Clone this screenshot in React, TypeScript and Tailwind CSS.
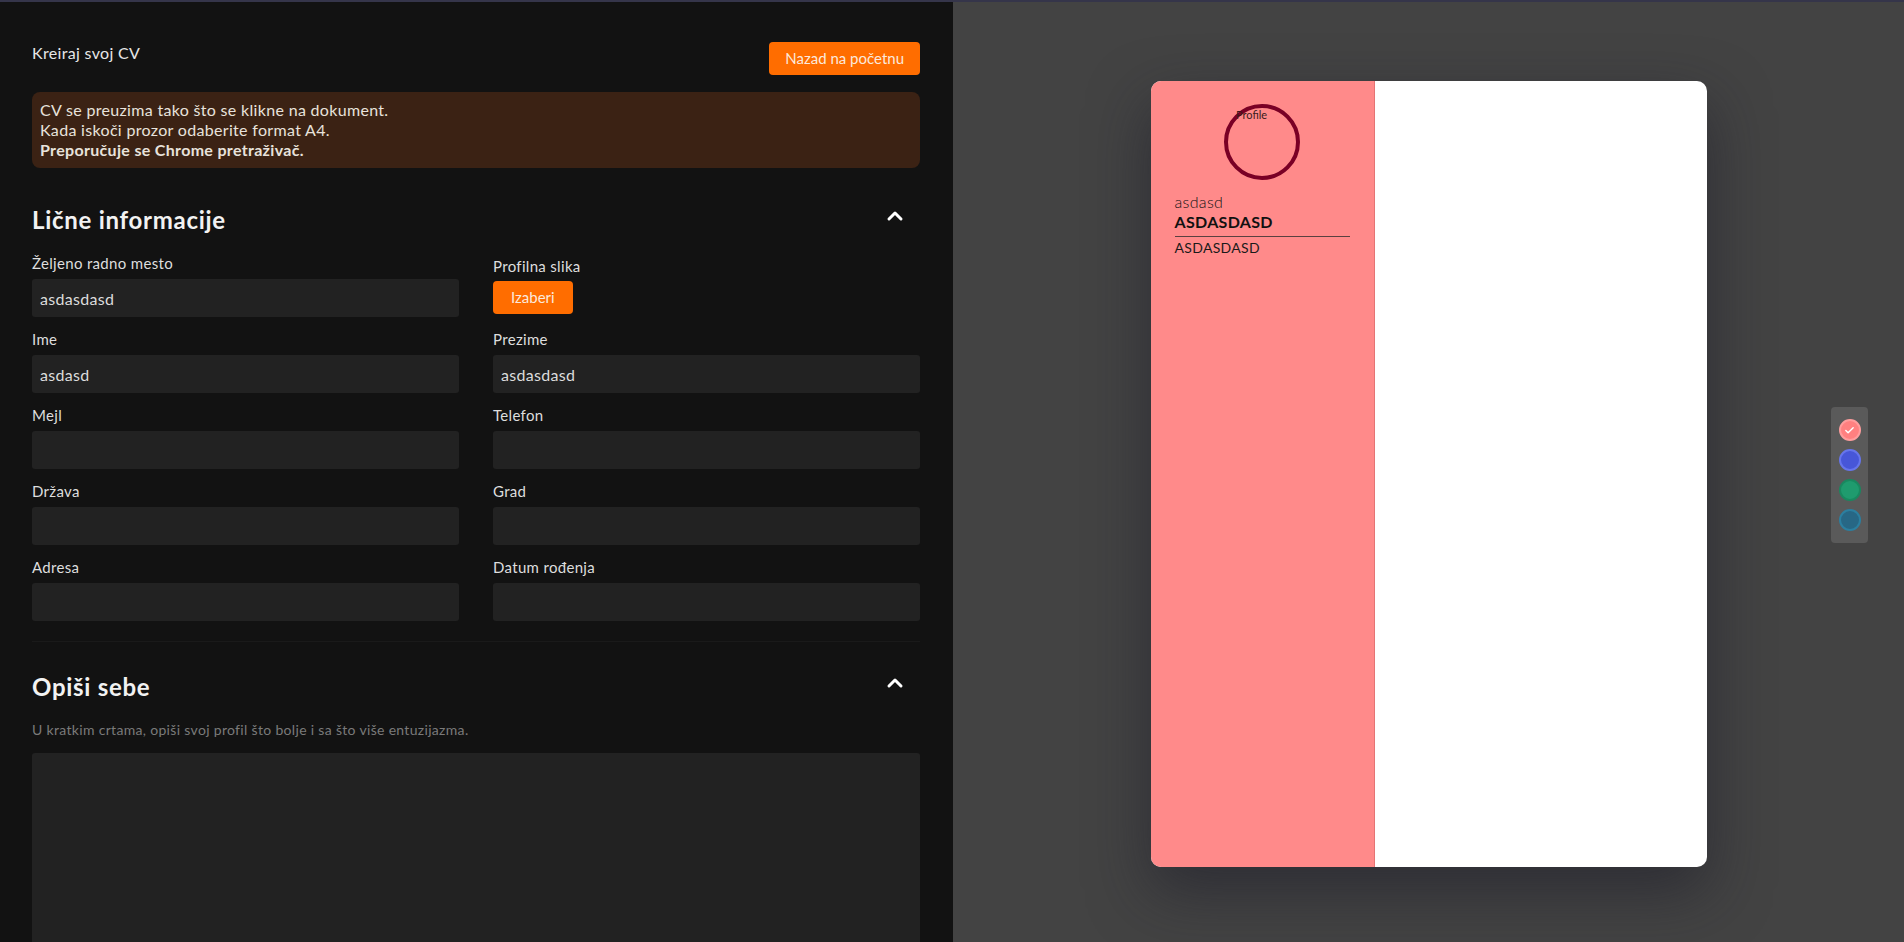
import React, { useState } from 'react';
import { ChevronUp, Check } from 'lucide-react';

const fields: [string, string][] = [
  ['Ime', 'asdasd'],
  ['Prezime', 'asdasdasd'],
  ['Mejl', ''],
  ['Telefon', ''],
  ['Država', ''],
  ['Grad', ''],
  ['Adresa', ''],
  ['Datum rođenja', ''],
];

const colors = [
  { bg: 'bg-[#ff8080]', border: 'border-[#ff9d9d]' },
  { bg: 'bg-[#4756d8]', border: 'border-[#6675ec]' },
  { bg: 'bg-[#1f9b6e]', border: 'border-[#19885f]' },
  { bg: 'bg-[#276785]', border: 'border-[#2b7fa0]' },
];

const Field = ({ label, value }: { label: string; value: string }) => (
  <div className="flex flex-col">
    <label className="text-[15px] leading-6 text-[#dedede]">{label}</label>
    <input
      readOnly
      value={value}
      className="mt-1 h-[38px] w-full rounded-[3px] bg-[#222222] px-2 text-base tracking-[0.02em] text-[#dcdcdc] outline-none"
    />
  </div>
);

const SectionHeader = ({ title }: { title: string }) => (
  <div className="flex h-8 items-center justify-between">
    <h2 className="text-2xl font-bold leading-8 tracking-[0.03em] text-[#f2f2f2]">{title}</h2>
    <button type="button" className="-mt-2 mr-[13px] text-white">
      <ChevronUp size={24} strokeWidth={3} />
    </button>
  </div>
);

export default function App() {
  const [active, setActive] = useState(0);

  return (
    <div
      className="flex h-screen w-full overflow-hidden border-t-2 border-[#35354a] tracking-[0.02em]"
      style={{ fontFamily: 'Lato, "Noto Sans", sans-serif' }}
    >
      {/* form */}
      <div className="w-[953px] shrink-0 overflow-hidden bg-[#121212] pl-8 pr-[33px] pt-[39px]">
        <div className="flex items-start justify-between">
          <span className="text-base leading-6 text-[#e6e6e6]">Kreiraj svoj CV</span>
          <button
            type="button"
            className="mt-[1px] h-[33px] rounded bg-[#ff6d00] px-4 text-[15px] tracking-normal text-[#fbe9dd]"
          >
            Nazad na početnu
          </button>
        </div>

        <div className="mt-[17px] rounded-lg bg-[#3b2214] p-2 text-base leading-5 text-[#e8e2dc]">
          <p>CV se preuzima tako što se klikne na dokument.</p>
          <p>Kada iskoči prozor odaberite format A4.</p>
          <p className="font-bold">Preporučuje se Chrome pretraživač.</p>
        </div>

        <div className="mt-9">
          <SectionHeader title="Lične informacije" />
        </div>

        <div className="mt-[15px] grid grid-cols-2 gap-x-[34px] gap-y-[10px]">
          <Field label="Željeno radno mesto" value="asdasdasd" />
          <div className="flex flex-col items-start pt-[3px]">
            <label className="text-[15px] leading-6 text-[#dedede]">Profilna slika</label>
            <button
              type="button"
              className="mt-[3px] h-[33px] rounded bg-[#ff6d00] px-[18px] text-[15px] tracking-normal text-[#fbe9dd]"
            >
              Izaberi
            </button>
          </div>
          {fields.map(([label, value]) => (
            <Field key={label} label={label} value={value} />
          ))}
        </div>

        <div className="mt-5 border-t border-[#1a1a1a]" />

        <div className="mt-[29px]">
          <SectionHeader title="Opiši sebe" />
        </div>
        <p className="mt-[17px] text-sm leading-5 text-[#7a7a7a]">
          U kratkim crtama, opiši svoj profil što bolje i sa što više entuzijazma.
        </p>
        <textarea
          readOnly
          className="mt-[13px] h-[400px] w-full resize-none rounded-[3px] bg-[#222222] outline-none"
        />
      </div>

      {/* preview */}
      <div className="relative flex flex-1 justify-center bg-[#434343]">
        <div className="mt-[79px] flex h-[786px] w-[556px] overflow-hidden rounded-[10px] bg-white shadow-[0_24px_60px_rgba(28,28,40,0.55)]">
          <div className="w-[224px] border-r border-[#e57474] bg-[#ff8a8a] px-6 pt-[23px]">
            <div className="relative mx-auto h-[76px] w-[76px] rounded-full border-4 border-[#7a0025]">
              <span className="absolute left-[8px] top-0 text-[11px] leading-[13px] tracking-normal text-[#3a1a1a]">
                Profile
              </span>
            </div>
            <p className="mt-3 text-base font-light leading-5 text-[#111111]">asdasd</p>
            <p className="text-base font-bold leading-5 text-[#111111]">ASDASDASD</p>
            <div className="mt-1 border-t border-[#5a4040]" />
            <p className="mt-[1px] text-sm leading-5 text-[#1a1a1a]">ASDASDASD</p>
          </div>
          <div className="flex-1" />
        </div>

        <div className="absolute right-[36px] top-[405px] flex w-[37px] flex-col items-center gap-2 rounded bg-[#5a5a5a] py-3">
          {colors.map((c, i) => (
            <button
              key={i}
              type="button"
              onClick={() => setActive(i)}
              className={`flex h-[22px] w-[22px] items-center justify-center rounded-full border-2 ${c.bg} ${c.border}`}
            >
              {active === i && <Check size={11} strokeWidth={3} className="text-white" />}
            </button>
          ))}
        </div>
      </div>
    </div>
  );
}
